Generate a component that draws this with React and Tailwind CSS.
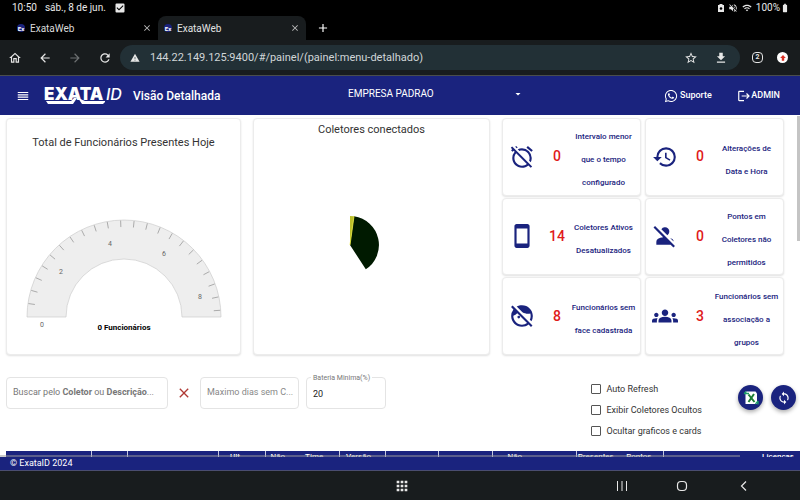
import React from "react";
import {
  MdAlarmOff, MdHistory, MdStayCurrentPortrait, MdPersonOff, MdFaceRetouchingOff, MdGroups,
  MdSync, MdStarBorder, MdDownload, MdArrowBack, MdArrowForward, MdRefresh, MdOutlineHome,
  MdWarning, MdClose, MdAdd, MdLogout, MdArrowDropDown, MdReorder, MdCheckBox, MdVolumeOff,
  MdWifi, MdBatteryFull, MdApps,
} from "react-icons/md";
import { FaWhatsapp } from "react-icons/fa";

function StatusBar() {
  return (
    <div className="flex h-4 shrink-0 items-center justify-between bg-black pr-2.5 pl-3 text-[10px] leading-4 text-[#e8e8e8]">
      <div className="flex items-center gap-2">
        <span>10:50</span>
        <span>sáb., 8 de jun.</span>
        <MdCheckBox className="size-3" />
      </div>
      <div className="flex items-center gap-1">
        <svg viewBox="0 0 6 8" className="h-2 w-1.5">
          <path fill="currentColor" d="M1.500 0h3v1H6v7H0V1h1.500z" />
          <circle cx="3" cy="4.500" r="1.300" fill="#000" />
        </svg>
        <MdVolumeOff className="size-2.5" />
        <MdWifi className="size-2.5" />
        <span className="flex items-center">
          100%
          <MdBatteryFull className="size-2.5" />
        </span>
      </div>
    </div>
  );
}

function Favicon() {
  return (
    <span className="flex size-2 items-center justify-center rounded-full bg-[#1a237e] text-[6px] font-bold text-white">
      Ex
    </span>
  );
}

function Tab({ active }) {
  return (
    <div
      className={
        active
          ? "flex w-[148px] items-center gap-[5px] rounded-t-lg bg-[#181c1e] px-1.5 text-[#e3e3e3]"
          : "flex w-[147px] items-center gap-[5px] px-1.5 text-[#dadada]"
      }
    >
      <Favicon />
      <span className="flex-1 text-[10px]">ExataWeb</span>
      <button type="button" aria-label="Fechar aba" className="text-[#c0c0c0]">
        <MdClose className="size-2.5" />
      </button>
    </div>
  );
}

function BrowserChrome() {
  return (
    <>
      <div className="flex h-6 shrink-0 items-stretch bg-black pl-[11px]">
        <Tab />
        <Tab active />
        <button type="button" aria-label="Nova aba" className="ml-2.5 text-white">
          <MdAdd className="size-3.5" />
        </button>
      </div>
      <div className="flex h-9 shrink-0 items-center border-b border-[#4a4d4c] bg-[#181c1e] pr-3 pl-2 text-[#e6e6e6]">
        <button type="button" aria-label="Início" className="mr-4"><MdOutlineHome className="size-3.5" /></button>
        <button type="button" aria-label="Voltar" className="mr-4"><MdArrowBack className="size-3.5" /></button>
        <button type="button" aria-label="Avançar" className="mr-4 text-[#6d7072]"><MdArrowForward className="size-3.5" /></button>
        <button type="button" aria-label="Recarregar" className="mr-2"><MdRefresh className="size-3.5" /></button>
        <div className="flex h-[25px] flex-1 items-center gap-2.5 rounded-full bg-[#223036] pr-3 pl-2.5">
          <MdWarning className="size-2.5" />
          <input
            aria-label="Endereço"
            defaultValue="144.22.149.125:9400/#/painel/(painel:menu-detalhado)"
            className="min-w-0 flex-1 bg-transparent pt-0.5 text-[11px] text-[#d0d6d8] outline-none"
          />
          <button type="button" aria-label="Favorito" className="mr-1.5"><MdStarBorder className="size-3.5" /></button>
          <button type="button" aria-label="Baixar"><MdDownload className="size-3.5" /></button>
        </div>
        <button type="button" aria-label="Abas abertas" className="ml-3 flex size-[11px] items-center justify-center rounded-sm border border-current text-[7px] font-bold">2</button>
        <button type="button" aria-label="Atualizar navegador" className="ml-3.5 flex size-[11px] items-center justify-center rounded-full bg-white">
          <svg viewBox="0 0 8 8" className="size-2"><path d="M4 1l2.800 3H5.200v2.800H2.800V4H1.200z" fill="#d93025" /></svg>
        </button>
      </div>
    </>
  );
}

function Logo() {
  return (
    <svg viewBox="0 0 82 26" className="h-[26px] w-[82px]" role="img" aria-label="EXATA ID">
      <text x="0" y="17" fontSize="17" fontWeight="900" fill="#fff" fontFamily="Inter, sans-serif">EXATA</text>
      <text x="62" y="17" fontSize="16" fontWeight="500" fontStyle="italic" fill="#fff" fontFamily="Inter, sans-serif">ID</text>
      <path fill="#fff" d="M2 18h25l3-3h3l-4 6H4zM34 15l4 6h21l2-2v-1H41z" />
    </svg>
  );
}

function AppHeader() {
  return (
    <header className="grid h-[39px] shrink-0 grid-cols-[348fr_316fr_136fr] items-center bg-[#1a237e] text-white">
      <div className="flex items-center pl-4">
        <button type="button" aria-label="Menu" className="mr-3.5"><MdReorder className="size-3.5" /></button>
        <Logo />
        <h1 className="ml-[7px] text-[12px] font-medium">Visão Detalhada</h1>
      </div>
      <label className="relative flex w-[176px] items-center pb-1">
        <select aria-label="Empresa" className="w-full appearance-none bg-transparent text-[10px] outline-none">
          <option>EMPRESA PADRAO</option>
        </select>
        <MdArrowDropDown className="pointer-events-none absolute right-0 size-3" />
      </label>
      <div className="flex items-center justify-between pr-5 text-[9px] font-medium">
        <a href="#suporte" className="flex items-center gap-0.5"><FaWhatsapp className="size-3.5" />Suporte</a>
        <a href="#sair" className="flex items-center"><MdLogout className="size-3.5" />ADMIN</a>
      </div>
    </header>
  );
}

const CARD = "rounded-sm border border-[#ececec] bg-white shadow-[0_1px_2px_#0000001f]";

const TICKS = Array.from({ length: 22 }, (_, i) => {
  const a = ((i + 1) * 8 * Math.PI) / 180;
  return { c: -Math.cos(a), s: -Math.sin(a) };
});

const GAUGE_LABELS = [
  ["0", 18, 111], ["2", 37, 58], ["4", 86, 30], ["6", 140, 40], ["8", 176, 83],
];

function Gauge() {
  return (
    <svg viewBox="0 0 200 120" className="mx-auto h-[120px] w-[200px]">
      <path d="M3 101a97 97 0 0 1 194 0h-39a58 58 0 0 0-116 0z" fill="#eee" stroke="#ccc" strokeWidth="0.700" />
      {TICKS.map((t, i) => (
        <line key={i} x1={100 + t.c * 90} y1={101 + t.s * 90} x2={100 + t.c * 96.500} y2={101 + t.s * 96.500} stroke="#999" strokeWidth="0.800" />
      ))}
      {GAUGE_LABELS.map(([text, x, y]) => (
        <text key={text} x={x} y={y} fontSize="7" fill="#666" textAnchor="middle">{text}</text>
      ))}
      <text x="100" y="114" fontSize="8" fontWeight="700" fill="#000" textAnchor="middle">0 Funcionários</text>
    </svg>
  );
}

const STATS = [
  { icon: MdAlarmOff, value: 0, lines: ["Intervalo menor", "que o tempo", "configurado"] },
  { icon: MdHistory, value: 0, lines: ["Alterações de", "Data e Hora"] },
  { icon: MdStayCurrentPortrait, value: 14, lines: ["Coletores Ativos", "Desatualizados"] },
  { icon: MdPersonOff, value: 0, lines: ["Pontos em", "Coletores não", "permitidos"] },
  { icon: MdFaceRetouchingOff, value: 8, lines: ["Funcionários sem", "face cadastrada"] },
  { icon: MdGroups, value: 3, lines: ["Funcionários sem", "associação a", "grupos"] },
];

function StatCard({ icon: Icon, value, lines }) {
  return (
    <div className={`${CARD} flex items-center pr-1 pl-1.5`}>
      <Icon className="size-[26px] shrink-0 text-[#1a237e]" />
      <span className="ml-2 w-7 shrink-0 text-center text-[14px] font-medium text-[#e01b1b]">{value}</span>
      <div className="flex-1 pt-1.5 text-center text-[8px] leading-[23px] font-medium whitespace-nowrap text-[#1a237e]">
        {lines.map((line) => <div key={line}>{line}</div>)}
      </div>
    </div>
  );
}

function Dashboard() {
  return (
    <section className="grid h-[237px] grid-cols-[235fr_237fr_282fr] gap-3">
      <div className={`${CARD} flex flex-col justify-between pt-4 pb-[18px]`}>
        <h2 className="text-center text-[11px] leading-4 text-[#333]">Total de Funcionários Presentes Hoje</h2>
        <Gauge />
      </div>
      <div className={`${CARD} flex flex-col pt-[3px]`}>
        <h2 className="text-center text-[11px] leading-4 text-[#333]">Coletores conectados</h2>
        <svg viewBox="0 0 60 60" className="mt-[77px] ml-[66px] size-[60px]">
          <path d="M30 30V1a29 29 0 0 1 4 .280z" fill="#bcc02c" />
          <path d="M30 30L34 1.280a29 29 0 0 1 11.800 53z" fill="#001a00" />
          <path d="M30 30L34 1.280" stroke="#f1f13a" strokeWidth="0.800" />
        </svg>
      </div>
      <div className="grid grid-cols-2 grid-rows-3 gap-x-1 gap-y-0.5">
        {STATS.map((s) => <StatCard key={s.lines.join(" ")} {...s} />)}
      </div>
    </section>
  );
}

const FIELD = "relative flex h-8 items-center rounded-sm border border-[#e4e4e4]";

function Filters() {
  return (
    <section className="mt-[18px] flex h-[78px] items-start">
      <div className="mt-1 flex items-center">
        <div className={`${FIELD} w-[162px]`}>
          <input id="busca" className="w-full px-1.5 text-[9px] outline-none" />
          <label htmlFor="busca" className="pointer-events-none absolute left-1.5 text-[9px] text-[#777]">
            Buscar pelo <b>Coletor</b> ou <b>Descrição</b>...
          </label>
        </div>
        <button type="button" aria-label="Limpar busca" className="mx-2 text-[#b03a35]"><MdClose className="size-4" /></button>
        <div className={`${FIELD} w-[99px]`}>
          <input aria-label="Maximo dias sem Comunicação" placeholder="Maximo dias sem C..." className="w-full pr-0.5 pl-1.5 text-[9px] outline-none placeholder:text-[#888]" />
        </div>
        <div className={`${FIELD} ml-[7px] w-20`}>
          <label htmlFor="bateria" className="absolute -top-1.5 left-1 bg-white px-0.5 text-[7px] leading-3 text-[#777]">Bateria Minima(%)</label>
          <input id="bateria" defaultValue="20" className="w-full px-1.5 pt-1 text-[9px] text-[#222] outline-none" />
        </div>
      </div>
      <div className="ml-auto flex flex-col gap-[9px] pt-2.5">
        {["Auto Refresh", "Exibir Coletores Ocultos", "Ocultar graficos e cards"].map((text) => (
          <label key={text} className="flex h-3 items-center gap-[5px] text-[9px] leading-3 text-[#333]">
            <input type="checkbox" className="size-2.5 appearance-none rounded-[1px] border border-[#555] checked:bg-[#1a237e]" />
            {text}
          </label>
        ))}
      </div>
      <div className="mt-3 ml-9 flex gap-2">
        <button type="button" aria-label="Exportar para Excel" className="flex size-[25px] items-center justify-center rounded-full bg-[#1a237e] shadow-[0_2px_4px_#00000055]">
          <svg viewBox="0 0 16 16" className="size-4">
            <path d="M2.500 1.500h10l1.500 2V14H2.500z" fill="#fff" />
            <path d="M5.500 4.500l6 7.500M11 4L5.500 12" stroke="#1e7d34" strokeWidth="2" />
            <path d="M1 3.500h5M3.500 1.500L1 3.500M15 11l-2.500 3M15 11v3.500" stroke="#1e9d6a" strokeWidth="1.300" fill="none" />
          </svg>
        </button>
        <button type="button" aria-label="Sincronizar" className="flex size-[25px] items-center justify-center rounded-full bg-[#1a237e] text-white shadow-[0_2px_4px_#00000055]">
          <MdSync className="size-3.5" />
        </button>
      </div>
    </section>
  );
}

function DevicesTable() {
  return (
    <table className="w-full table-fixed bg-[#1a237e] text-[8px] leading-[11px] text-white">
      <thead>
        <tr className="h-8 align-top">
          <th className="w-[10.800%] border-r border-[#c5c8e0]" />
          <th className="w-[4.500%] border-r border-[#c5c8e0]" />
          <th className="w-[11.500%] border-r border-[#c5c8e0]" />
          <th className="w-[5.900%] border-r border-[#c5c8e0] pr-3 font-medium">Ult.</th>
          <th className="w-[3%] font-medium">Não</th>
          <th className="w-[6.300%] font-medium">Time</th>
          <th className="w-[5.800%] border-x border-[#c5c8e0] pr-2 font-medium">Versão</th>
          <th className="w-[6.700%] border-r border-[#c5c8e0]" />
          <th className="w-[6.800%]" />
          <th className="w-[5.500%] border-l border-[#c5c8e0] font-medium">Não</th>
          <th className="w-[5%]" />
          <th className="w-[4.900%] border-l border-[#c5c8e0] font-medium">Presentes</th>
          <th className="w-[6.100%] font-medium">Pontos</th>
          <th className="border-l border-[#c5c8e0] pr-1.5 text-right font-medium">Licenças</th>
        </tr>
      </thead>
    </table>
  );
}

export default function App() {
  return (
    <div className="flex h-screen flex-col overflow-hidden bg-white font-[Roboto,sans-serif]">
      <StatusBar />
      <BrowserChrome />
      <AppHeader />
      <main className="relative min-h-0 flex-1 overflow-hidden pt-[3px] pl-1.5">
        <div className="pr-4"><Dashboard /></div>
        <div className="pr-1"><Filters /></div>
        <DevicesTable />
        <div className="absolute top-px right-0 h-[125px] w-[3px] bg-[#c4c4c4]" />
        <div className="absolute bottom-0 left-0 h-0.5 w-[92.500%] bg-[#9a9a9a]/50" />
      </main>
      <footer className="h-3.5 shrink-0 border-b border-[#4a4d70] bg-[#1a237e] pl-2.5 text-[9px] leading-3 text-white">© ExataID 2024</footer>
      <nav className="grid h-[29px] shrink-0 grid-cols-[402fr_220fr_60fr_62fr_56fr] items-center bg-[#181c1e] text-[#e8e8e8]">
        <button type="button" aria-label="Aplicativos" className="-mr-2 justify-self-end"><MdApps className="size-4" /></button>
        <button type="button" aria-label="Recentes" className="-mr-1.5 justify-self-end">
          <svg viewBox="0 0 12 12" className="size-3"><path d="M1.500 1v10M6 1v10M10.500 1v10" stroke="currentColor" /></svg>
        </button>
        <button type="button" aria-label="Início" className="-mr-1.5 justify-self-end">
          <svg viewBox="0 0 12 12" className="size-3"><rect x="1.500" y="1.500" width="9" height="9" rx="3.500" fill="none" stroke="currentColor" strokeWidth="1.200" /></svg>
        </button>
        <button type="button" aria-label="Voltar" className="-mr-1.5 justify-self-end">
          <svg viewBox="0 0 12 12" className="size-3"><path d="M8 1.500L3.500 6L8 10.500" fill="none" stroke="currentColor" strokeWidth="1.200" /></svg>
        </button>
      </nav>
    </div>
  );
}
